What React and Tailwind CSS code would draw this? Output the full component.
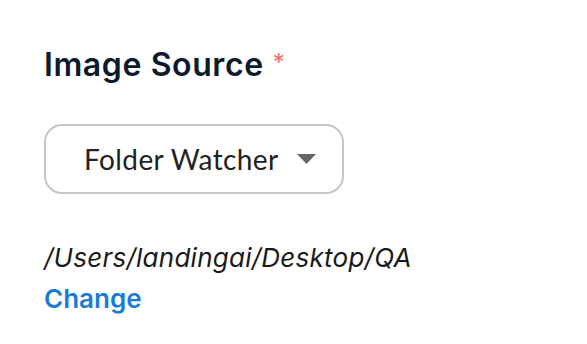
export default function App() {
  return (
    <div className="w-[587px] h-[344px] bg-white pl-[44px] pt-[45px]">
      <div className="flex items-start gap-[9px]">
        <h2 className="text-[32px] leading-[40px] font-semibold text-[#0c1a2c] font-['Inter',sans-serif] tracking-[0.6px]">
          Image Source
        </h2>
        <span className="text-[24px] leading-[24px] mt-[6px] text-[#f26b6b] font-['Inter',sans-serif]">*</span>
      </div>

      <button className="mt-[39px] w-[300px] h-[70px] border-2 border-[#c6c6c6] rounded-[18px] bg-white flex items-center pl-[38px] pr-[26px] justify-between">
        <span className="text-[28px] text-[#222] font-['Lato',sans-serif] tracking-[0.4px]">Folder Watcher</span>
        <svg width="19" height="10" viewBox="0 0 19 10">
          <path d="M0 0 L19 0 L9.5 10 Z" fill="#666" />
        </svg>
      </button>

      <div className="mt-[46px] text-[26px] leading-[36px] italic text-[#1a1a1a] font-['Inter',sans-serif] tracking-[0.25px]">
        /Users/landingai/Desktop/QA
      </div>
      <button className="text-[26px] leading-[36px] font-semibold text-[#1a7ad9] font-['Inter',sans-serif] mt-[5px]">
        Change
      </button>
    </div>
  );
}
